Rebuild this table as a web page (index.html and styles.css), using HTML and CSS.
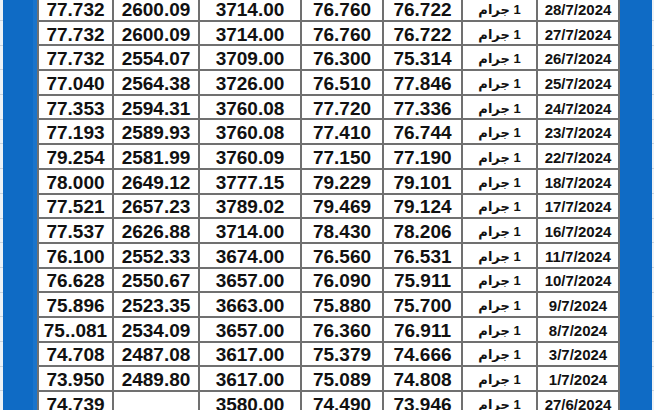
FILE: index.html
```html
<!DOCTYPE html>
<html lang="ar">
<head>
<meta charset="utf-8">
<title>أسعار الذهب</title>
<link rel="stylesheet" href="styles.css">
</head>
<body>
<div class="sheet">
  <div class="edge edge-left"></div>
  <div class="band band-left"></div>
  <div class="grid">
    <div class="c">77.732</div><div class="c">2600.09</div><div class="c">3714.00</div><div class="c">76.760</div><div class="c">76.722</div><div class="c unit" dir="rtl">1 جرام</div><div class="c date">28/7/2024</div>
    <div class="c">77.732</div><div class="c">2600.09</div><div class="c">3714.00</div><div class="c">76.760</div><div class="c">76.722</div><div class="c unit" dir="rtl">1 جرام</div><div class="c date">27/7/2024</div>
    <div class="c">77.732</div><div class="c">2554.07</div><div class="c">3709.00</div><div class="c">76.300</div><div class="c">75.314</div><div class="c unit" dir="rtl">1 جرام</div><div class="c date">26/7/2024</div>
    <div class="c">77.040</div><div class="c">2564.38</div><div class="c">3726.00</div><div class="c">76.510</div><div class="c">77.846</div><div class="c unit" dir="rtl">1 جرام</div><div class="c date">25/7/2024</div>
    <div class="c">77.353</div><div class="c">2594.31</div><div class="c">3760.08</div><div class="c">77.720</div><div class="c">77.336</div><div class="c unit" dir="rtl">1 جرام</div><div class="c date">24/7/2024</div>
    <div class="c">77.193</div><div class="c">2589.93</div><div class="c">3760.08</div><div class="c">77.410</div><div class="c">76.744</div><div class="c unit" dir="rtl">1 جرام</div><div class="c date">23/7/2024</div>
    <div class="c">79.254</div><div class="c">2581.99</div><div class="c">3760.09</div><div class="c">77.150</div><div class="c">77.190</div><div class="c unit" dir="rtl">1 جرام</div><div class="c date">22/7/2024</div>
    <div class="c">78.000</div><div class="c">2649.12</div><div class="c">3777.15</div><div class="c">79.229</div><div class="c">79.101</div><div class="c unit" dir="rtl">1 جرام</div><div class="c date">18/7/2024</div>
    <div class="c">77.521</div><div class="c">2657.23</div><div class="c">3789.02</div><div class="c">79.469</div><div class="c">79.124</div><div class="c unit" dir="rtl">1 جرام</div><div class="c date">17/7/2024</div>
    <div class="c">77.537</div><div class="c">2626.88</div><div class="c">3714.00</div><div class="c">78.430</div><div class="c">78.206</div><div class="c unit" dir="rtl">1 جرام</div><div class="c date">16/7/2024</div>
    <div class="c">76.100</div><div class="c">2552.33</div><div class="c">3674.00</div><div class="c">76.560</div><div class="c">76.531</div><div class="c unit" dir="rtl">1 جرام</div><div class="c date">11/7/2024</div>
    <div class="c">76.628</div><div class="c">2550.67</div><div class="c">3657.00</div><div class="c">76.090</div><div class="c">75.911</div><div class="c unit" dir="rtl">1 جرام</div><div class="c date">10/7/2024</div>
    <div class="c">75.896</div><div class="c">2523.35</div><div class="c">3663.00</div><div class="c">75.880</div><div class="c">75.700</div><div class="c unit" dir="rtl">1 جرام</div><div class="c date">9/7/2024</div>
    <div class="c">75..081</div><div class="c">2534.09</div><div class="c">3657.00</div><div class="c">76.360</div><div class="c">76.911</div><div class="c unit" dir="rtl">1 جرام</div><div class="c date">8/7/2024</div>
    <div class="c">74.708</div><div class="c">2487.08</div><div class="c">3617.00</div><div class="c">75.379</div><div class="c">74.666</div><div class="c unit" dir="rtl">1 جرام</div><div class="c date">3/7/2024</div>
    <div class="c">73.950</div><div class="c">2489.80</div><div class="c">3617.00</div><div class="c">75.089</div><div class="c">74.808</div><div class="c unit" dir="rtl">1 جرام</div><div class="c date">1/7/2024</div>
    <div class="c">74.739</div><div class="c"></div><div class="c">3580.00</div><div class="c">74.490</div><div class="c">73.946</div><div class="c unit" dir="rtl">1 جرام</div><div class="c date">27/6/2024</div>
  </div>
  <div class="band band-right"></div>
  <div class="edge edge-right"></div>
</div>
</body>
</html>
```

FILE: styles.css
```css
html, body {
  margin: 0;
  padding: 0;
  width: 654px;
  height: 410px;
  overflow: hidden;
  background: #ffffff;
}

.sheet {
  display: flex;
  width: 654px;
  height: 410px;
  overflow: hidden;
  align-items: flex-start;
}

.edge {
  align-self: stretch;
  background-color: #eef2f6;
  background-image: repeating-linear-gradient(to bottom, transparent 0, transparent 20px, #c9d2dc 20px, #c9d2dc 21px, transparent 21px, transparent 24.69px);
}

.edge-left {
  width: 3px;
}

.edge-right {
  width: 2px;
}

.band {
  align-self: stretch;
  background: #0f6bc5;
}

.band-left {
  width: 30px;
  border-right: 4px solid #1a74cb;
}

.band-right {
  width: 32px;
}

.grid {
  display: grid;
  grid-template-columns: 73px 84px 100px 80px 77px 73px 80px;
  grid-auto-rows: 22.69px;
  gap: 2px;
  padding: 2px;
  margin-top: -5px;
  background: #707070;
  width: 583px;
  box-sizing: border-box;
  flex: none;
}

.c {
  background: #ffffff;
  display: flex;
  align-items: center;
  justify-content: center;
  padding-top: 2px;
  box-sizing: border-box;
  font-family: "Liberation Sans", Arial, "DejaVu Sans", sans-serif;
  font-weight: bold;
  font-size: 19px;
  color: #111111;
  white-space: nowrap;
  line-height: 1;
}

.unit {
  font-family: "Liberation Sans", "DejaVu Sans", sans-serif;
  font-size: 13px;
  font-weight: bold;
}

.date {
  font-size: 15px;
}
```
